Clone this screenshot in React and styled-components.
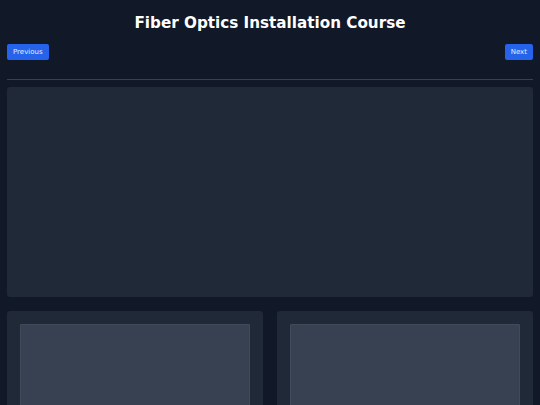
import React from "react";
import styled, { createGlobalStyle } from "styled-components";

const Global = createGlobalStyle`
  html, body { margin: 0; padding: 0; background: #111827; }
  body { font-family: "DejaVu Sans", "Liberation Sans", sans-serif; color: #f9fafb; }
  * { box-sizing: border-box; }
`;

const Page = styled.div`
  min-height: 405px;
  padding: 7px;
  background: #111827;
`;

const Title = styled.h1`
  margin: 7px 0 0;
  font-size: 15.2px;
  line-height: 18px;
  font-weight: 700;
  text-align: center;
  color: #ffffff;
`;

const Nav = styled.nav`
  display: flex;
  justify-content: space-between;
  align-items: center;
  margin-top: 12px;
  padding-bottom: 19px;
  border-bottom: 1px solid #374151;
`;

const NavButton = styled.button`
  height: 16px;
  padding: 0 6px;
  border: none;
  border-radius: 2px;
  background: #2563eb;
  color: #e5edff;
  font-family: "DejaVu Sans", sans-serif;
  font-size: 7px;
  line-height: 16px;
  cursor: pointer;
`;

const Stage = styled.section`
  margin-top: 7px;
  height: 210px;
  background: #1f2937;
  border-radius: 3px;
`;

const Grid = styled.div`
  display: grid;
  grid-template-columns: 1fr 1fr;
  gap: 14px;
  margin-top: 14px;
`;

const Card = styled.div`
  background: #1f2937;
  border-radius: 3px;
  padding: 13px 13px 0;
  height: 120px;
`;

const Thumb = styled.div`
  height: 120px;
  background: #374151;
  border: 1px solid #3f4a5a;
  border-radius: 1px;
`;

export default function App() {
  return (
    <>
      <Global />
      <Page>
        <Title>Fiber Optics Installation Course</Title>
        <Nav>
          <NavButton>Previous</NavButton>
          <NavButton>Next</NavButton>
        </Nav>
        <Stage />
        <Grid>
          <Card><Thumb /></Card>
          <Card><Thumb /></Card>
        </Grid>
      </Page>
    </>
  );
}
